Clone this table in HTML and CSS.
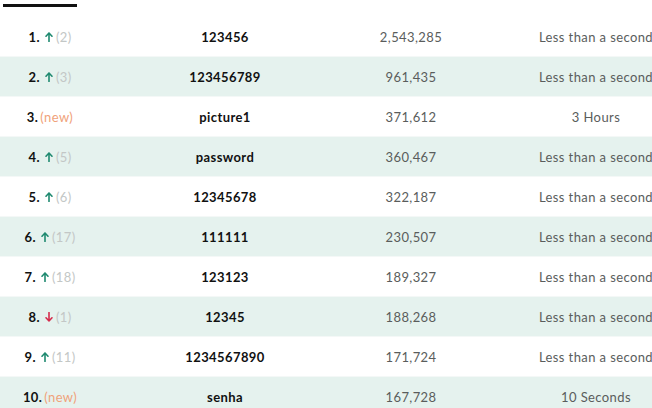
FILE: index.html
```html
<!DOCTYPE html>
<html lang="en">
<head>
<meta charset="utf-8">
<link rel="stylesheet" href="styles.css">
<title>Top passwords</title>
</head>
<body>
<div class="tab-line"></div>
<div class="table">
  <div class="row">
    <div class="rank"><span class="num">1.</span><svg class="arrow up" viewBox="0 0 8 10"><path d="M4 9.5V1M1 4.2L4 1l3 3.2"/></svg><span class="prev">(2)</span></div>
    <div class="pw">123456</div><div class="count">2,543,285</div><div class="time">Less than a second</div>
  </div>
  <div class="row alt">
    <div class="rank"><span class="num">2.</span><svg class="arrow up" viewBox="0 0 8 10"><path d="M4 9.5V1M1 4.2L4 1l3 3.2"/></svg><span class="prev">(3)</span></div>
    <div class="pw">123456789</div><div class="count">961,435</div><div class="time">Less than a second</div>
  </div>
  <div class="row">
    <div class="rank"><span class="num">3.</span><span class="new">(new)</span></div>
    <div class="pw">picture1</div><div class="count">371,612</div><div class="time">3 Hours</div>
  </div>
  <div class="row alt">
    <div class="rank"><span class="num">4.</span><svg class="arrow up" viewBox="0 0 8 10"><path d="M4 9.5V1M1 4.2L4 1l3 3.2"/></svg><span class="prev">(5)</span></div>
    <div class="pw">password</div><div class="count">360,467</div><div class="time">Less than a second</div>
  </div>
  <div class="row">
    <div class="rank"><span class="num">5.</span><svg class="arrow up" viewBox="0 0 8 10"><path d="M4 9.5V1M1 4.2L4 1l3 3.2"/></svg><span class="prev">(6)</span></div>
    <div class="pw">12345678</div><div class="count">322,187</div><div class="time">Less than a second</div>
  </div>
  <div class="row alt">
    <div class="rank"><span class="num">6.</span><svg class="arrow up" viewBox="0 0 8 10"><path d="M4 9.5V1M1 4.2L4 1l3 3.2"/></svg><span class="prev">(17)</span></div>
    <div class="pw">111111</div><div class="count">230,507</div><div class="time">Less than a second</div>
  </div>
  <div class="row">
    <div class="rank"><span class="num">7.</span><svg class="arrow up" viewBox="0 0 8 10"><path d="M4 9.5V1M1 4.2L4 1l3 3.2"/></svg><span class="prev">(18)</span></div>
    <div class="pw">123123</div><div class="count">189,327</div><div class="time">Less than a second</div>
  </div>
  <div class="row alt">
    <div class="rank"><span class="num">8.</span><svg class="arrow down" viewBox="0 0 8 10"><path d="M4 0.5V9M1 5.8L4 9l3-3.2"/></svg><span class="prev">(1)</span></div>
    <div class="pw">12345</div><div class="count">188,268</div><div class="time">Less than a second</div>
  </div>
  <div class="row">
    <div class="rank"><span class="num">9.</span><svg class="arrow up" viewBox="0 0 8 10"><path d="M4 9.5V1M1 4.2L4 1l3 3.2"/></svg><span class="prev">(11)</span></div>
    <div class="pw">1234567890</div><div class="count">171,724</div><div class="time">Less than a second</div>
  </div>
  <div class="row alt">
    <div class="rank"><span class="num">10.</span><span class="new">(new)</span></div>
    <div class="pw">senha</div><div class="count">167,728</div><div class="time">10 Seconds</div>
  </div>
</div>
</body>
</html>
```
FILE: styles.css
```css
html, body {
  margin: 0;
  padding: 0;
  overflow: hidden;
  background: #ffffff;
}
body {
  font-family: Lato, "Open Sans", sans-serif;
  font-size: 13px;
  letter-spacing: 0.4px;
  color: #222;
  width: 720px;
}
.tab-line {
  width: 74px;
  height: 3px;
  background: #111;
  margin: 4px 0 10px 3px;
}
.table {
  display: flex;
  flex-direction: column;
}
.row {
  display: grid;
  grid-template-columns: 100px 250px 122px 248px;
  height: 40px;
  align-items: center;
  background: #ffffff;
  border-bottom: 1px solid #f4f8f7;
  box-sizing: border-box;
}
.row.alt {
  background: #e5f2ee;
}
.rank {
  display: flex;
  justify-content: center;
  align-items: center;
}
.num {
  font-weight: 700;
  color: #111;
  margin-right: 5px;
}
.arrow {
  width: 8px;
  height: 10px;
  fill: none;
  stroke-width: 1.6;
  stroke-linecap: round;
  stroke-linejoin: round;
  margin-right: 3px;
}
.arrow.up { stroke: #1f8a70; }
.arrow.down { stroke: #d52c4c; }
.prev {
  color: #c3c7c6;
}
.new {
  color: #f0a27a;
  margin-left: -3px;
}
.pw {
  text-align: center;
  font-weight: 700;
  color: #111;
}
.count {
  text-align: center;
  color: #5a5d5c;
}
.time {
  text-align: center;
  color: #5a5d5c;
  white-space: nowrap;
}
```
